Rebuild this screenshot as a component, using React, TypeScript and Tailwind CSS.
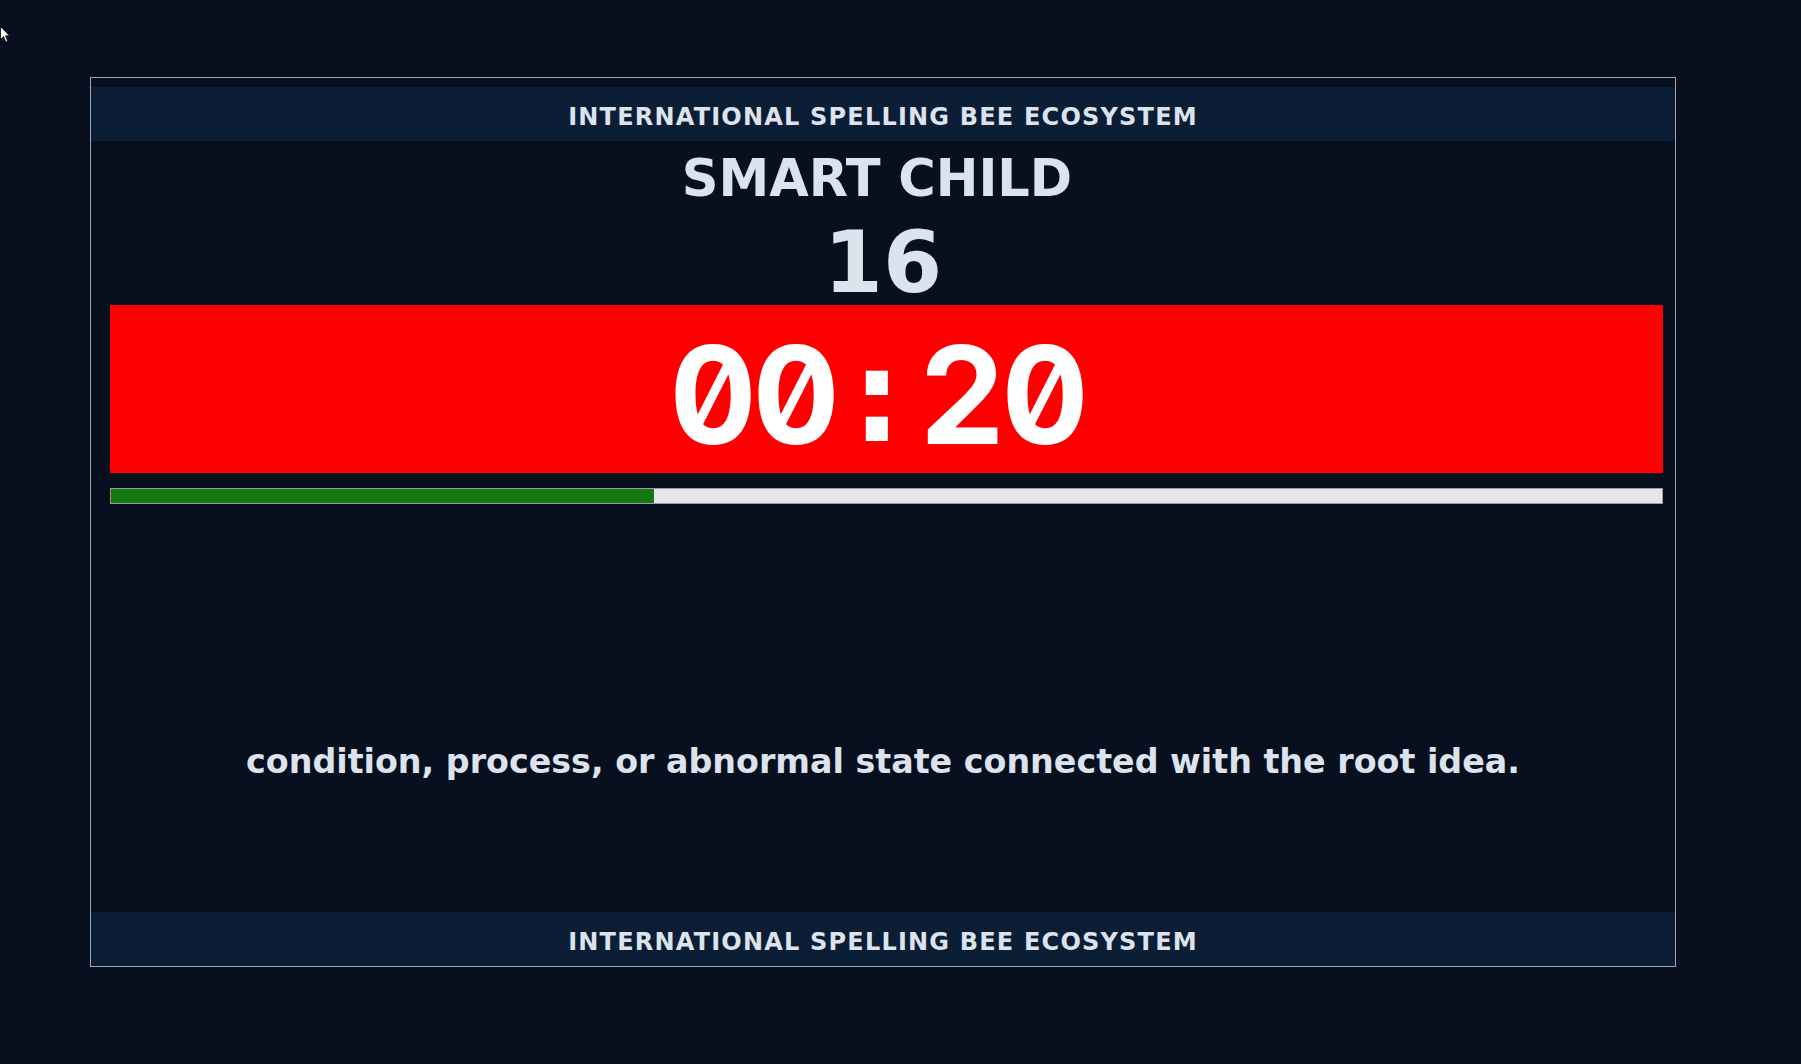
import React from "react";

const timeChars = ["0", "0", ":", "2", "0"];

export default function App() {
  const progress = 35;
  return (
    <div className="relative min-h-screen w-full bg-[#08101f] pt-[77px] pb-[97px] [font-family:'DejaVu_Sans',Verdana,sans-serif] text-[#dce3ec]">
      <svg
        className="absolute left-0 top-[26px]"
        width="10"
        height="17"
        viewBox="0 0 10 17"
      >
        <path
          d="M0.5 0.5 L0.5 13.5 L3.5 10.5 L5.8 16 L7.8 15.2 L5.6 9.8 L9.5 9.8 Z"
          fill="#ffffff"
          stroke="#000000"
          strokeWidth="0.8"
        />
      </svg>

      <div className="ml-[90px] w-[1586px] h-[890px] border border-[#a3a7ad] flex flex-col">
        <div className="mt-[9px] h-[54px] pt-[6px] bg-[#0c1d36] flex items-center justify-center text-[24px] font-bold tracking-[1.2px]">
          INTERNATIONAL SPELLING BEE ECOSYSTEM
        </div>

        <div className="mt-[9px] pr-[12px] text-center text-[51px] leading-[58px] font-bold">
          SMART CHILD
        </div>

        <div className="mt-[12px] text-center text-[85px] leading-[85px] font-bold">
          16
        </div>

        <div className="ml-[19px] w-[1553px] h-[168px] bg-[#ff0000] pt-[12px] pr-[19px] flex justify-center text-white font-bold text-[135px] leading-[156px]">
          {timeChars.map((c, i) =>
            c === ":" ? (
              <span
                key={i}
                className="inline-block w-[83px] text-center [font-family:'DejaVu_Sans_Mono',monospace]"
              >
                {c}
              </span>
            ) : (
              <span
                key={i}
                className="inline-block w-[83px] text-center [font-family:Inter,sans-serif] [font-feature-settings:'zero'_1,'tnum'_1]"
              >
                {c}
              </span>
            )
          )}
        </div>

        <div className="mt-[15px] ml-[19px] w-[1553px] h-[16px] border border-[#9a9a9a] bg-[#e6e6e6]">
          <div className="h-full bg-[#107a10]" style={{ width: `${progress}%` }} />
        </div>

        <div className="mt-[239px] text-center text-[33.3px] leading-[38px] font-bold">
          condition, process, or abnormal state connected with the root idea.
        </div>

        <div className="mt-auto h-[54px] pt-[6px] bg-[#0c1d36] flex items-center justify-center text-[24px] font-bold tracking-[1.2px]">
          INTERNATIONAL SPELLING BEE ECOSYSTEM
        </div>
      </div>
    </div>
  );
}
